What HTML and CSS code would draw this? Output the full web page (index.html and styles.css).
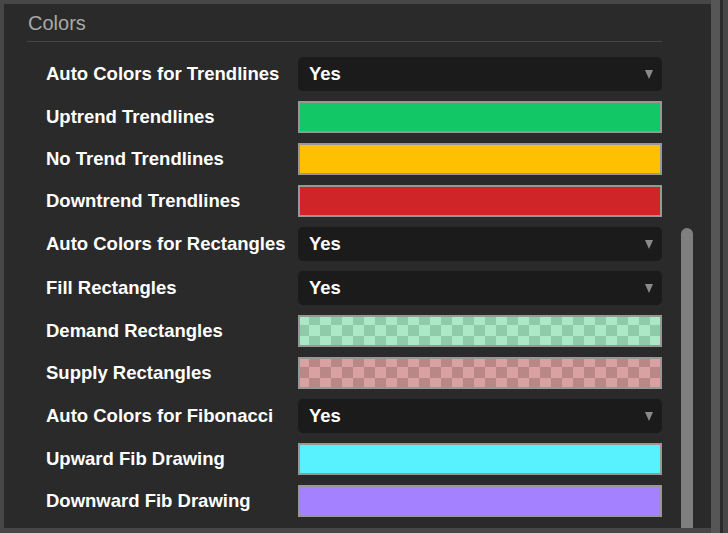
FILE: index.html
```html
<!DOCTYPE html>
<html lang="en">

<head>
    <meta charset="UTF-8">
    <meta name="viewport" content="width=device-width, initial-scale=1.0">
    <title>Colors</title>
    <link rel="stylesheet" href="styles.css">
</head>

<body>
    <div class="panel">
        <div class="settings">
            <h3 class="section-title">Colors</h3>

            <div class="setting-row">
                <label>Auto Colors for Trendlines</label>
                <div class="select">Yes<span class="arrow"></span></div>
            </div>
            <div class="setting-row">
                <label>Uptrend Trendlines</label>
                <div class="swatch swatch-up"></div>
            </div>
            <div class="setting-row">
                <label>No Trend Trendlines</label>
                <div class="swatch swatch-flat"></div>
            </div>
            <div class="setting-row">
                <label>Downtrend Trendlines</label>
                <div class="swatch swatch-down"></div>
            </div>
            <div class="setting-row">
                <label>Auto Colors for Rectangles</label>
                <div class="select">Yes<span class="arrow"></span></div>
            </div>
            <div class="setting-row">
                <label>Fill Rectangles</label>
                <div class="select">Yes<span class="arrow"></span></div>
            </div>
            <div class="setting-row">
                <label>Demand Rectangles</label>
                <div class="swatch swatch-demand"></div>
            </div>
            <div class="setting-row">
                <label>Supply Rectangles</label>
                <div class="swatch swatch-supply"></div>
            </div>
            <div class="setting-row">
                <label>Auto Colors for Fibonacci</label>
                <div class="select">Yes<span class="arrow"></span></div>
            </div>
            <div class="setting-row">
                <label>Upward Fib Drawing</label>
                <div class="swatch swatch-fib-up"></div>
            </div>
            <div class="setting-row">
                <label>Downward Fib Drawing</label>
                <div class="swatch swatch-fib-down"></div>
            </div>
        </div>

        <div class="scroll-track">
            <div class="scroll-thumb"></div>
        </div>
    </div>

    <div class="side-strip"></div>
</body>

</html>
```

FILE: styles.css
```css
body {
    font-family: "Liberation Sans", Arial, sans-serif;
    margin: 0;
    height: 533px;
    overflow: hidden;
    background-color: #474747;
    display: flex;
    align-items: flex-start;
}

.panel {
    margin: 4px 0 0 4px;
    width: 707px;
    height: 524px;
    background: #2a2a2a;
    display: flex;
    overflow: hidden;
}

.settings {
    width: 635px;
    margin-left: 23px;
}

.section-title {
    margin: 0;
    padding: 8px 0 6px 1px;
    font-size: 20px;
    line-height: 23px;
    font-weight: normal;
    color: #a9a9a9;
    border-bottom: 1px solid #454545;
    margin-bottom: 15px;
}

.setting-row {
    display: flex;
    align-items: center;
    margin-bottom: 10px;
}

.setting-row label {
    flex-shrink: 0;
    width: 271px;
    padding-left: 19px;
    box-sizing: border-box;
    font-size: 18.5px;
    font-weight: bold;
    white-space: nowrap;
    color: #fff;
}

.select {
    flex: 1;
    height: 34px;
    line-height: 34px;
    padding-left: 11px;
    background: #1b1b1b;
    border-radius: 5px;
    color: #fff;
    font-size: 18.5px;
    font-weight: bold;
    display: flex;
    justify-content: space-between;
    align-items: center;
}

.arrow {
    width: 0;
    height: 0;
    margin-right: 9px;
    border-left: 4.5px solid transparent;
    border-right: 4.5px solid transparent;
    border-top: 9px solid #8a8a8a;
}

.swatch {
    flex: 1;
    height: 32px;
    box-sizing: border-box;
    border: 2px solid #979797;
}

.swatch-up {
    background: #12c866;
}

.swatch-flat {
    background: #fec000;
}

.swatch-down {
    background: #d02528;
}

.swatch-demand {
    background: repeating-conic-gradient(#8fcaa9 0 25%, #aae8c6 0 50%) -2px -3px / 22px 22px;
}

.swatch-supply {
    background: repeating-conic-gradient(#ba8787 0 25%, #d9a1a1 0 50%) -2px -3px / 22px 22px;
}

.swatch-fib-up {
    background: #58f2ff;
}

.swatch-fib-down {
    background: #a381ff;
}

.scroll-track {
    width: 12px;
    margin-left: 19px;
    padding-top: 224px;
}

.scroll-thumb {
    height: 320px;
    background: #7f7f7f;
    border-radius: 6px 6px 0 0;
}

.side-strip {
    width: 9px;
    height: 533px;
    background: #565656;
    border-right: 3px solid #2c2c2c;
}
```
